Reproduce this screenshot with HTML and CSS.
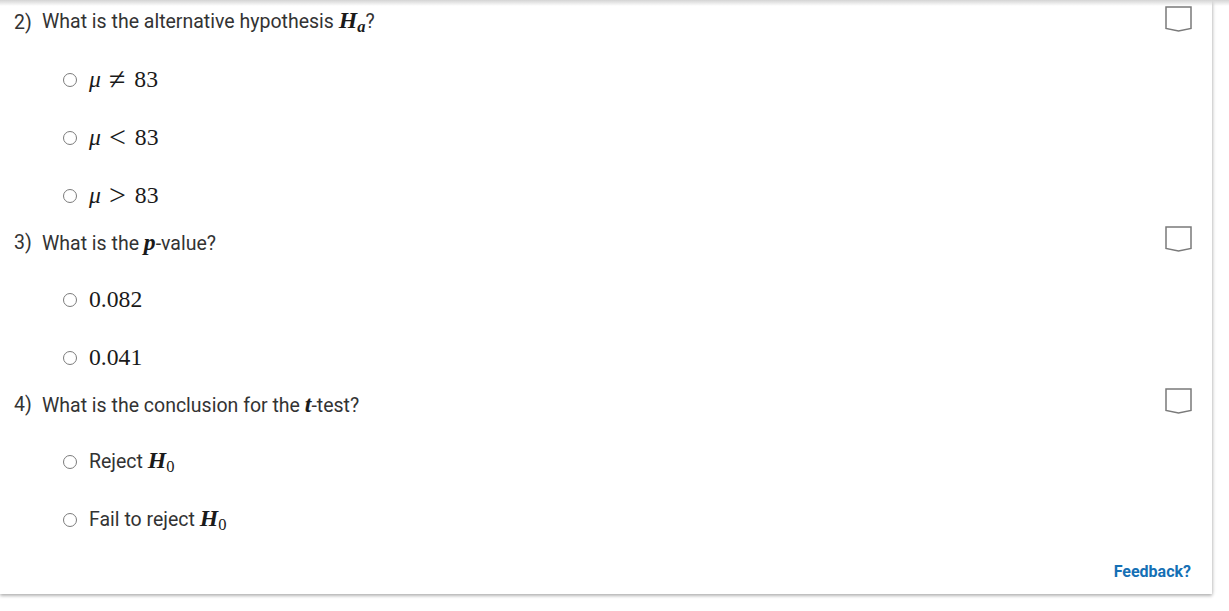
FILE: index.html
```html
<!DOCTYPE html>
<html>
<head>
<meta charset="utf-8">
<link rel="stylesheet" href="styles.css">
</head>
<body>
<div class="topshade"></div>
<div class="card">
  <div class="question">
    <div class="qhead">
      <span class="num">2)</span>
      <span class="qtext">What is the alternative hypothesis <span class="m"><i>H</i><sub><i>a</i></sub></span>?</span>
      <span class="mark"><svg width="27" height="26" viewBox="0 0 27 26"><path d="M1 1 H26 V22.5 L13.5 25 L1 22.5 Z" fill="#fff" stroke="#7a7a7a" stroke-width="1.5"/></svg></span>
    </div>
    <ul class="opts">
      <li><span class="radio"></span><span class="m big"><i>μ</i><span class="rel">≠</span>83</span></li>
      <li><span class="radio"></span><span class="m big"><i>μ</i><span class="rel">&lt;</span>83</span></li>
      <li><span class="radio"></span><span class="m big"><i>μ</i><span class="rel">&gt;</span>83</span></li>
    </ul>
  </div>
  <div class="question">
    <div class="qhead">
      <span class="num">3)</span>
      <span class="qtext">What is the <span class="m"><i>p</i></span>-value?</span>
      <span class="mark"><svg width="27" height="26" viewBox="0 0 27 26"><path d="M1 1 H26 V22.5 L13.5 25 L1 22.5 Z" fill="#fff" stroke="#7a7a7a" stroke-width="1.5"/></svg></span>
    </div>
    <ul class="opts">
      <li><span class="radio"></span><span class="m big">0.082</span></li>
      <li><span class="radio"></span><span class="m big">0.041</span></li>
    </ul>
  </div>
  <div class="question">
    <div class="qhead">
      <span class="num">4)</span>
      <span class="qtext">What is the conclusion for the <span class="m"><i>t</i></span>-test?</span>
      <span class="mark"><svg width="27" height="26" viewBox="0 0 27 26"><path d="M1 1 H26 V22.5 L13.5 25 L1 22.5 Z" fill="#fff" stroke="#7a7a7a" stroke-width="1.5"/></svg></span>
    </div>
    <ul class="opts">
      <li><span class="radio"></span><span class="otext">Reject <span class="m"><i>H</i><sub>0</sub></span></span></li>
      <li><span class="radio"></span><span class="otext">Fail to reject <span class="m"><i>H</i><sub>0</sub></span></span></li>
    </ul>
  </div>
  <div class="foot"><a class="feedback">Feedback?</a></div>
</div>
</body>
</html>
```

FILE: styles.css
```css
html, body {
  margin: 0;
  padding: 0;
  background: #fff;
  overflow: hidden;
  height: 611px;
}
body {
  font-family: Roboto, "Liberation Sans", sans-serif;
  color: #333;
}
.topshade {
  position: fixed;
  left: 0;
  top: 0;
  width: 100%;
  height: 6px;
  background: linear-gradient(#d4d4d4, rgba(255,255,255,0));
  z-index: 5;
}
.card {
  width: 1212px;
  box-sizing: border-box;
  background: #fff;
  padding: 5px 21px 11px 14px;
  box-shadow: 0 2px 3px rgba(0,0,0,0.25), 1px 0 4px rgba(0,0,0,0.12);
}
.qhead {
  display: flex;
  align-items: center;
  height: 34px;
  margin-bottom: 12px;
  font-size: 19.5px;
}
.num {
  width: 28px;
  flex: none;
}
.qtext {
  flex: 1;
}
.mark {
  display: flex;
  margin-top: -7px;
  margin-right: -1px;
}
.m {
  font-family: "Liberation Serif", "Times New Roman", serif;
  font-size: 23.7px;
  color: #1a1a1a;
}
.m i {
  font-weight: bold;
}
.m sub {
  font-size: 16.5px;
  vertical-align: -4px;
}
.opts {
  list-style: none;
  margin: 0;
  padding: 0;
}
.opts li {
  display: flex;
  align-items: center;
  height: 58px;
  padding-left: 49px;
}
.radio {
  width: 12px;
  height: 12px;
  border: 1.5px solid #7b7b7b;
  border-radius: 50%;
  flex: none;
  margin-right: 12px;
}
.big {
  font-size: 23.7px;
  line-height: 26px;
  margin-top: -2px;
}
.big i {
  font-weight: normal;
}
.rel {
  font-size: 30px;
  line-height: 26px;
  vertical-align: -2px;
  padding: 0 9px 0 8px;
}
.otext {
  font-size: 19.5px;
}
.foot {
  display: flex;
  justify-content: flex-end;
  height: 24px;
  margin-top: 10px;
  align-items: center;
}
.feedback {
  font-size: 16px;
  font-weight: bold;
  color: #1570b5;
}
```
